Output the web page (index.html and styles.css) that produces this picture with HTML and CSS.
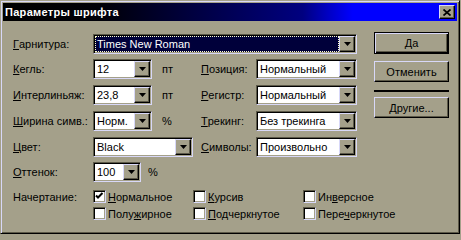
FILE: index.html
```html
<!DOCTYPE html>
<html lang="ru">
<head>
<meta charset="utf-8">
<title>Параметры шрифта</title>
<link rel="stylesheet" href="styles.css">
</head>
<body>
<div class="window">
  <div class="titlebar">
    <span class="title">Параметры шрифта</span>
    <span class="close"><svg width="8" height="7" viewBox="0 0 8 7"><path d="M0.5 0.5 L7.5 6.5 M7.5 0.5 L0.5 6.5" stroke="#000" stroke-width="1.7" fill="none"/></svg></span>
  </div>
  <div class="main">
    <div class="form-area">
      <div class="grid">
        <div class="label"><u>Г</u>арнитура:</div>
        <div class="combo wide"><span class="value sel">Times New Roman</span><span class="arrow"><svg width="7" height="4" viewBox="0 0 7 4"><path d="M0 0h7l-3.5 4z" fill="#000"/></svg></span></div>

        <div class="label"><u>К</u>егль:</div>
        <div class="combo"><span class="value">12</span><span class="arrow"><svg width="7" height="4" viewBox="0 0 7 4"><path d="M0 0h7l-3.5 4z" fill="#000"/></svg></span></div>
        <div class="unit">пт</div>
        <div class="label"><u>П</u>озиция:</div>
        <div class="combo"><span class="value">Нормальный</span><span class="arrow"><svg width="7" height="4" viewBox="0 0 7 4"><path d="M0 0h7l-3.5 4z" fill="#000"/></svg></span></div>

        <div class="label"><u>И</u>нтерлиньяж:</div>
        <div class="combo"><span class="value">23,8</span><span class="arrow"><svg width="7" height="4" viewBox="0 0 7 4"><path d="M0 0h7l-3.5 4z" fill="#000"/></svg></span></div>
        <div class="unit">пт</div>
        <div class="label"><u>Р</u>егистр:</div>
        <div class="combo"><span class="value">Нормальный</span><span class="arrow"><svg width="7" height="4" viewBox="0 0 7 4"><path d="M0 0h7l-3.5 4z" fill="#000"/></svg></span></div>

        <div class="label"><u>Ш</u>ирина симв.:</div>
        <div class="combo"><span class="value">Норм.</span><span class="arrow"><svg width="7" height="4" viewBox="0 0 7 4"><path d="M0 0h7l-3.5 4z" fill="#000"/></svg></span></div>
        <div class="unit">%</div>
        <div class="label"><u>Т</u>рекинг:</div>
        <div class="combo"><span class="value">Без трекинга</span><span class="arrow"><svg width="7" height="4" viewBox="0 0 7 4"><path d="M0 0h7l-3.5 4z" fill="#000"/></svg></span></div>

        <div class="label"><u>Ц</u>вет:</div>
        <div class="combo color"><span class="value">Black</span><span class="arrow"><svg width="7" height="4" viewBox="0 0 7 4"><path d="M0 0h7l-3.5 4z" fill="#000"/></svg></span></div>
        <div class="label"><u>С</u>имволы:</div>
        <div class="combo"><span class="value">Произвольно</span><span class="arrow"><svg width="7" height="4" viewBox="0 0 7 4"><path d="M0 0h7l-3.5 4z" fill="#000"/></svg></span></div>

        <div class="label"><u>О</u>ттенок:</div>
        <div class="shade-cell">
          <div class="combo shade"><span class="value">100</span><span class="arrow"><svg width="7" height="4" viewBox="0 0 7 4"><path d="M0 0h7l-3.5 4z" fill="#000"/></svg></span></div>
          <span class="unit-inline">%</span>
        </div>
      </div>

      <div class="styles">
        <div class="label slabel">Начертание:</div>
        <label class="check"><span class="cb"><svg width="9" height="9" viewBox="0 0 9 9"><path d="M1 3.5 L3 5.5 L7.5 1" stroke="#000" stroke-width="2" fill="none"/></svg></span><span><u>Н</u>ормальное</span></label>
        <label class="check"><span class="cb"></span><span><u>К</u>урсив</span></label>
        <label class="check"><span class="cb"></span><span>Ин<u>в</u>ерсное</span></label>
        <div></div>
        <label class="check"><span class="cb"></span><span>Полу<u>ж</u>ирное</span></label>
        <label class="check"><span class="cb"></span><span><u>П</u>одчеркнутое</span></label>
        <label class="check"><span class="cb"></span><span>Пере<u>ч</u>еркнутое</span></label>
      </div>
    </div>

    <div class="buttons">
      <div class="btn default">Да</div>
      <div class="btn cancel">Отменить</div>
      <div class="sep"></div>
      <div class="btn"><span><u>Д</u>ругие...</span></div>
    </div>
  </div>
</div>
</body>
</html>
```

FILE: styles.css
```css
* { box-sizing: border-box; }
html, body { margin: 0; padding: 0; }
body {
  width: 461px;
  height: 235px;
  overflow: hidden;
  background: #a4a08a;
  font-family: "Liberation Sans", Arial, sans-serif;
  font-size: 11px;
  color: #000;
}
u { text-decoration: underline; text-underline-offset: 1px; }

.window {
  width: 460px;
  height: 234px;
  background: #a4a08a;
  border: 1px solid;
  border-color: #a4a08a #000 #000 #a4a08a;
  box-shadow: inset 1px 1px 0 #d8d8f8, inset -1px -1px 0 #5c5948;
  padding: 2px;
}

.titlebar {
  height: 18px;
  display: flex;
  align-items: center;
  justify-content: space-between;
  padding: 0 2px 0 2px;
  background: linear-gradient(to right, #000000 0%, #000008 22%, #000040 42%, #000080 66%, #0000c8 72%, #0000ff 77%, #0000ff 100%);
}
.title {
  color: #fff;
  font-weight: bold;
  font-size: 11px;
  letter-spacing: 0.3px;
}
.close {
  width: 16px;
  height: 14px;
  display: flex;
  align-items: center;
  justify-content: center;
  background: #a4a08a;
  border: 1px solid;
  border-color: #d8d8f8 #000 #000 #d8d8f8;
  box-shadow: inset -1px -1px 0 #5c5948;
}

.main {
  display: flex;
  padding: 11px 0 0 10px;
}
.form-area { width: 344px; }

.grid {
  margin-top: 2px;
  display: grid;
  grid-template-columns: 80px 59px 49px 55px 101px;
  grid-template-rows: 25px 26px 26px 26px 25px 20px;
  align-items: start;
}
.label {
  height: 20px;
  display: flex;
  align-items: center;
  white-space: nowrap;
}
.unit {
  height: 20px;
  display: flex;
  align-items: center;
  padding-left: 10px;
}

.combo {
  height: 20px;
  display: flex;
  background: #fff;
  border: 1px solid;
  border-color: #5c5948 #d8d8f8 #d8d8f8 #5c5948;
  box-shadow: inset 1px 1px 0 #000, inset -1px -1px 0 #a4a08a;
  padding: 1px;
}
.combo.wide { grid-column: 2 / 6; }
.combo.color { grid-column: 2 / 4; width: 100px; }
.combo.shade { width: 48px; }
.shade-cell {
  grid-column: 2 / 4;
  display: flex;
  align-items: center;
}
.unit-inline { padding-left: 7px; }

.value {
  flex: 1;
  min-width: 0;
  padding-left: 2px;
  line-height: 16px;
  white-space: nowrap;
  overflow: hidden;
}
.value.sel {
  background: #00003a;
  color: #fff;
  outline: 1px dotted #ffffc8;
  outline-offset: -1px;
}
.arrow {
  width: 16px;
  height: 16px;
  flex: none;
  display: flex;
  align-items: center;
  justify-content: center;
  background: #a4a08a;
  border: 1px solid;
  border-color: #d8d8f8 #000 #000 #d8d8f8;
  box-shadow: inset -1px -1px 0 #5c5948;
}

.styles {
  margin-top: 8px;
  display: grid;
  grid-template-columns: 80px 100px 110px auto;
  grid-template-rows: 13px 13px;
  row-gap: 4px;
  align-items: center;
}
.slabel { height: 13px; }
.check {
  display: flex;
  align-items: center;
  gap: 2px;
  white-space: nowrap;
  height: 13px;
}
.cb {
  width: 13px;
  height: 13px;
  flex: none;
  background: #fff;
  border: 1px solid;
  border-color: #5c5948 #d8d8f8 #d8d8f8 #5c5948;
  box-shadow: inset 1px 1px 0 #000, inset -1px -1px 0 #a4a08a;
  display: flex;
  align-items: center;
  justify-content: center;
}

.buttons {
  margin-left: 17px;
  width: 75px;
  display: flex;
  flex-direction: column;
}
.btn {
  width: 75px;
  height: 21px;
  display: flex;
  align-items: center;
  justify-content: center;
  background: #a4a08a;
  border: 1px solid;
  border-color: #d8d8f8 #000 #000 #d8d8f8;
  box-shadow: inset -1px -1px 0 #5c5948;
}
.btn.default {
  height: 22px;
  border-color: #000;
  box-shadow: inset 1px 1px 0 #d8d8f8, inset -1px -1px 0 #000, inset -2px -2px 0 #5c5948;
}
.btn.cancel { margin-top: 7px; }
.sep {
  margin-top: 8px;
  height: 2px;
  background: #000;
  margin-bottom: 5px;
}
```
